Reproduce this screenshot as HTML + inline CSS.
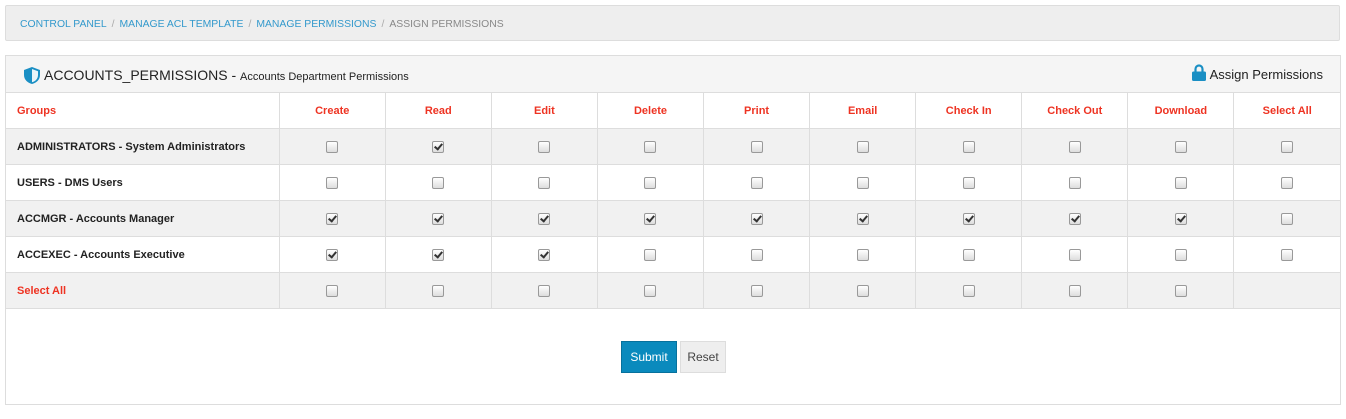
<!DOCTYPE html>
<html><head><meta charset="utf-8"><style>
*{box-sizing:border-box}
body{margin:0;background:#fff;font-family:"Liberation Sans",sans-serif;width:1346px;height:419px;overflow:hidden}
.bc{position:absolute;left:5px;top:5px;width:1335px;height:36px;background:#eee;border:1px solid #ddd;border-radius:2px;font-size:10.4px;line-height:34px;padding-left:14px;padding-top:2px;color:#888}
.bc a{color:#3399cc}
.bc span{color:#aaa;margin:0 5px}
.panel{position:absolute;left:5px;top:55px;width:1336px;height:350px;border:1px solid #ddd}
.ph{height:37px;background:#f5f5f5;border-bottom:1px solid #ddd;position:relative;font-size:14px;color:#222;line-height:38px;padding-left:38px}
.ph small{font-size:11px}
.ph .r{position:absolute;right:17px;top:0;font-size:13px}
table{border-collapse:collapse;position:absolute;left:0;top:36px;width:1334px;table-layout:fixed}
td,th{border:1px solid #ddd;height:36px;font-size:11px;text-align:center;padding:0}
th{color:#ee3322;font-weight:bold;background:#fff}
td:first-child,th:first-child{text-align:left;padding-left:11px;border-left:none;font-weight:bold;color:#222}
td:last-child,th:last-child{border-right:none}
th:first-child{color:#ee3322}
tr.s td{background:#f1f1f1}
.c{display:inline-block;width:12px;height:12px;border:1px solid #999;border-radius:2px;background:linear-gradient(#fff,#ddd);vertical-align:middle;position:relative}
.k::after{content:"";position:absolute;left:3px;top:0px;width:3px;height:6px;border:solid #333;border-width:0 2px 2px 0;transform:rotate(40deg)}
.btn{position:absolute;top:285px;height:32px;font-size:12px;line-height:30px;text-align:center}
</style></head><body>
<div class="bc"><a>CONTROL PANEL</a><span>/</span><a>MANAGE ACL TEMPLATE</a><span>/</span><a>MANAGE PERMISSIONS</a><span>/</span>ASSIGN PERMISSIONS</div>
<div class="panel">
<div class="ph"><svg style="position:absolute;left:18px;top:11px" width="16" height="17" viewBox="0 0 16 17"><path d="M8 0L16 3V8C16 13 12 16 8 17C4 16 0 13 0 8V3Z" fill="#1a8fc4"/><path d="M8 2L14 4.3V8C14 12 11 14.5 8 15.3Z" fill="#fff" opacity=".9"/></svg>ACCOUNTS_PERMISSIONS - <small>Accounts Department Permissions</small>
<span class="r"><svg width="14" height="17" viewBox="0 0 14 17" style="vertical-align:-2px;margin-right:4px"><path d="M3.5 8V5a3.5 3.5 0 0 1 7 0v3" fill="none" stroke="#1a8fc4" stroke-width="2.2"/><rect x="0" y="7.5" width="14" height="9.5" rx="1.5" fill="#1a8fc4"/></svg>Assign Permissions</span></div>
<table>
<colgroup><col style="width:273px"><col span="10" style="width:106px"></colgroup>
<tr><th>Groups</th><th>Create</th><th>Read</th><th>Edit</th><th>Delete</th><th>Print</th><th>Email</th><th>Check In</th><th>Check Out</th><th>Download</th><th>Select All</th></tr>
<tr class="s"><td>ADMINISTRATORS - System Administrators</td><td><i class="c"></i></td><td><i class="c k"></i></td><td><i class="c"></i></td><td><i class="c"></i></td><td><i class="c"></i></td><td><i class="c"></i></td><td><i class="c"></i></td><td><i class="c"></i></td><td><i class="c"></i></td><td><i class="c"></i></td></tr>
<tr><td>USERS - DMS Users</td><td><i class="c"></i></td><td><i class="c"></i></td><td><i class="c"></i></td><td><i class="c"></i></td><td><i class="c"></i></td><td><i class="c"></i></td><td><i class="c"></i></td><td><i class="c"></i></td><td><i class="c"></i></td><td><i class="c"></i></td></tr>
<tr class="s"><td>ACCMGR - Accounts Manager</td><td><i class="c k"></i></td><td><i class="c k"></i></td><td><i class="c k"></i></td><td><i class="c k"></i></td><td><i class="c k"></i></td><td><i class="c k"></i></td><td><i class="c k"></i></td><td><i class="c k"></i></td><td><i class="c k"></i></td><td><i class="c"></i></td></tr>
<tr><td>ACCEXEC - Accounts Executive</td><td><i class="c k"></i></td><td><i class="c k"></i></td><td><i class="c k"></i></td><td><i class="c"></i></td><td><i class="c"></i></td><td><i class="c"></i></td><td><i class="c"></i></td><td><i class="c"></i></td><td><i class="c"></i></td><td><i class="c"></i></td></tr>
<tr class="s"><td style="color:#ee3322">Select All</td><td><i class="c"></i></td><td><i class="c"></i></td><td><i class="c"></i></td><td><i class="c"></i></td><td><i class="c"></i></td><td><i class="c"></i></td><td><i class="c"></i></td><td><i class="c"></i></td><td><i class="c"></i></td><td></td></tr>
</table>
<div class="btn" style="left:615px;width:56px;background:#0a8abd;border:1px solid #07719c;color:#fff">Submit</div>
<div class="btn" style="left:674px;width:46px;background:#eee;border:1px solid #ddd;color:#444">Reset</div>
</div>
</body></html>
